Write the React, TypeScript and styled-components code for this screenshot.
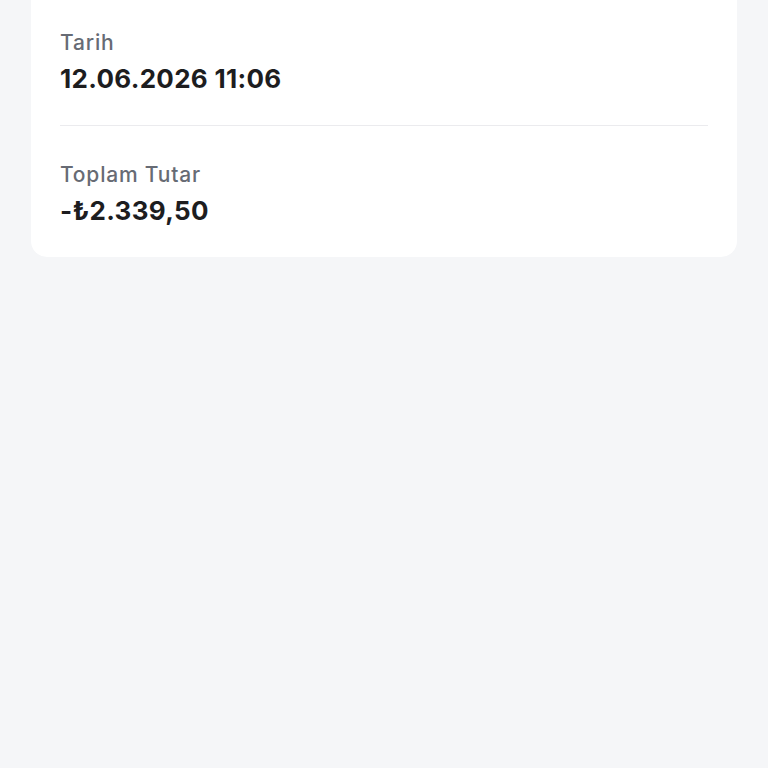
import React from "react";
import styled, { createGlobalStyle } from "styled-components";

const Global = createGlobalStyle`
  html, body {
    margin: 0;
    padding: 0;
    background: #f5f6f8;
    font-family: Inter, "Noto Sans", "Liberation Sans", sans-serif;
    -webkit-font-smoothing: antialiased;
  }
  #root { overflow: hidden; min-height: 768px; }
`;

const Page = styled.div`
  min-height: 768px;
  background: #f5f6f8;
  overflow: hidden;
`;

const Card = styled.section`
  margin: -30px 31px 0;
  padding: 24px 29px 0;
  background: #ffffff;
  border-radius: 16px;
`;

const Row = styled.div<{ $divider?: boolean }>`
  display: flex;
  flex-direction: column;
  gap: 7px;
  padding: 36px 0 31px;
  border-bottom: ${(p) => (p.$divider ? "1px solid #ebebee" : "none")};
`;

const Label = styled.div`
  font-size: 21px;
  line-height: 26px;
  font-weight: 500;
  letter-spacing: 0.8px;
  color: #676b74;
`;

const Value = styled.div`
  font-size: 26px;
  line-height: 31px;
  font-weight: 700;
  letter-spacing: 0.3px;
  color: #1d1d1f;
`;

const rows = [
  { label: "Tarih", value: "12.06.2026 11:06" },
  { label: "Toplam Tutar", value: "-₺2.339,50" },
];

export default function App() {
  return (
    <Page>
      <Global />
      <Card>
        {rows.map((r, i) => (
          <Row key={r.label} $divider={i < rows.length - 1}>
            <Label>{r.label}</Label>
            <Value>{r.value}</Value>
          </Row>
        ))}
      </Card>
    </Page>
  );
}
